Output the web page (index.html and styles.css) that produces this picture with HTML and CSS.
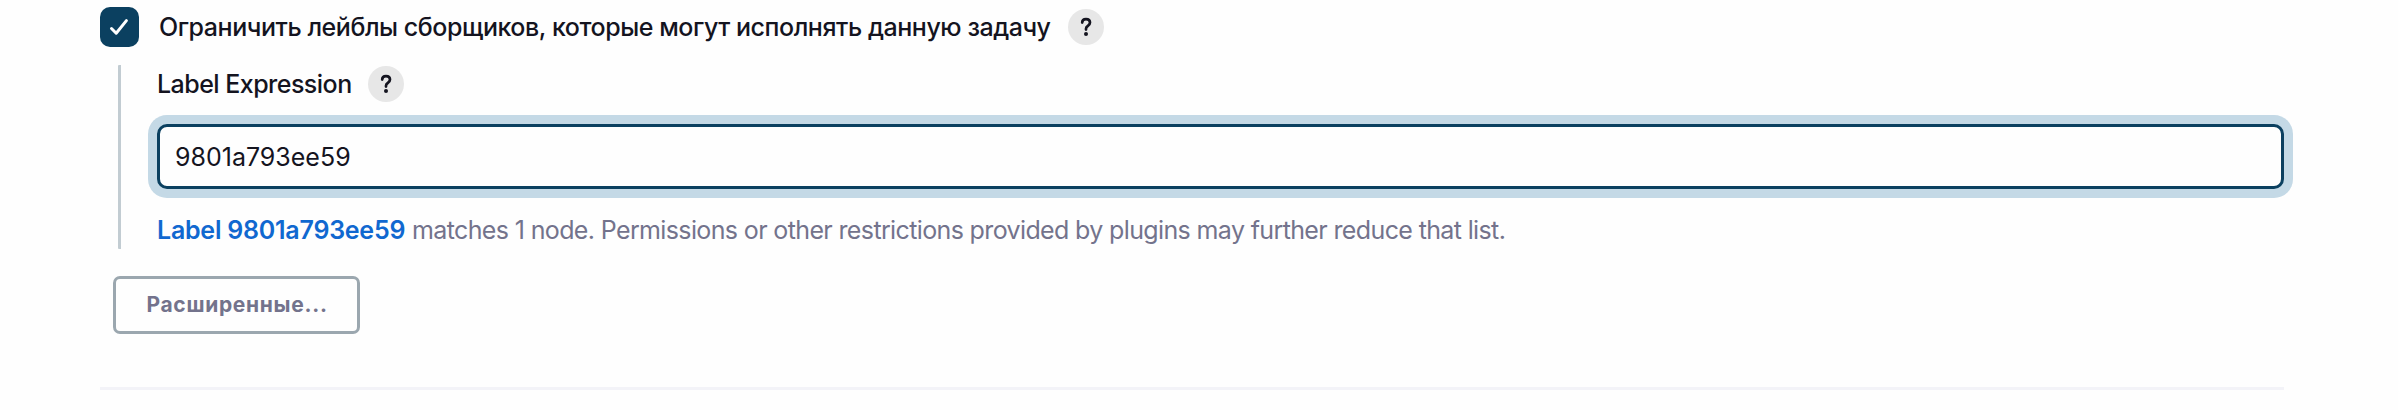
FILE: index.html
```html
<!DOCTYPE html>
<html lang="ru">
<head>
<meta charset="utf-8">
<title>Label Expression</title>
<link rel="stylesheet" href="styles.css">
</head>
<body>
<form class="section">
  <div class="option">
    <span class="checkbox" role="checkbox" aria-checked="true">
      <svg width="39" height="40" viewBox="0 0 39 40" fill="none" stroke="#fff" stroke-width="3" stroke-linecap="round" stroke-linejoin="round"><path d="M11.5 21.5L16.2 26.2L26.4 13.6"/></svg>
    </span>
    <span class="option-label">Ограничить лейблы сборщиков, которые могут исполнять данную задачу</span>
    <span class="help"><svg width="36" height="36" viewBox="0 0 36 36" fill="none" stroke="#14141f" stroke-width="2.7" stroke-linecap="round" stroke-linejoin="round"><path d="M14.2 13.6C14.2 11.5 15.8 10.2 18 10.2C20.4 10.2 22 11.6 22 13.6C22 15.2 21.2 16 19.9 16.9C18.6 17.8 18 18.5 18 19.8V20.6"/><circle cx="18" cy="25.1" r="2" fill="#14141f" stroke="none"/></svg></span>
  </div>
  <div class="nested">
    <div class="field-head">
      <span class="field-label">Label Expression</span>
      <span class="help"><svg width="36" height="36" viewBox="0 0 36 36" fill="none" stroke="#14141f" stroke-width="2.7" stroke-linecap="round" stroke-linejoin="round"><path d="M14.2 13.6C14.2 11.5 15.8 10.2 18 10.2C20.4 10.2 22 11.6 22 13.6C22 15.2 21.2 16 19.9 16.9C18.6 17.8 18 18.5 18 19.8V20.6"/><circle cx="18" cy="25.1" r="2" fill="#14141f" stroke="none"/></svg></span>
    </div>
    <input class="field" type="text" value="9801a793ee59" spellcheck="false">
    <div class="hint"><a class="hint-link">Label 9801a793ee59</a><span class="hint-text">matches 1 node. Permissions or other restrictions provided by plugins may further reduce that list.</span></div>
  </div>
  <button class="advanced" type="button">Расширенные...</button>
</form>
</body>
</html>
```
FILE: styles.css
```css
* { box-sizing: border-box; }
body {
  margin: 0;
  background: #fefefe;
  color: #14141f;
  font-family: Inter, "Liberation Sans", sans-serif;
  font-size: 25px;
}
.section {
  display: flex;
  flex-direction: column;
  align-items: flex-start;
  width: 2184px;
  height: 390px;
  margin-left: 100px;
  padding-top: 7px;
  border-bottom: 3px solid #f3f3f8;
}
.option {
  display: flex;
  align-items: center;
  height: 40px;
  white-space: nowrap;
}
.checkbox {
  width: 39px;
  height: 40px;
  border-radius: 10px;
  background: #0b4060;
}
.checkbox svg, .help svg { display: block; }
.option-label {
  width: 909px;
  margin-left: 20px;
  font-weight: 500;
  letter-spacing: -0.45px;
}
.help {
  flex: none;
  width: 36px;
  height: 36px;
  border-radius: 50%;
  background: #e7e7e7;
}
.nested {
  width: 2166px;
  height: 184px;
  margin: 18px 0 0 18px;
  padding-left: 36px;
  border-left: 3px solid #c2ccd2;
  border-radius: 1px;
}
.field-head {
  display: flex;
  align-items: center;
  height: 38px;
}
.field-label {
  width: 211px;
  font-weight: 500;
  letter-spacing: -0.53px;
  white-space: nowrap;
}
.field {
  display: block;
  width: 100%;
  height: 65px;
  margin: 21px 0 0;
  padding: 0 15px;
  border: 3px solid #0b4060;
  border-radius: 10px;
  outline: none;
  box-shadow: 0 0 0 9px #c4d9e6;
  background: #fefefe;
  color: #14141f;
  font: 400 25px Inter, "Liberation Sans", sans-serif;
  letter-spacing: 0;
}
.hint {
  display: flex;
  height: 36px;
  margin-top: 23px;
  line-height: 36px;
  white-space: nowrap;
}
.hint-link {
  width: 255px;
  color: #1068d0;
  font-weight: 600;
  letter-spacing: -0.24px;
}
.hint-text {
  color: #73738c;
  letter-spacing: -0.63px;
}
.advanced {
  width: 247px;
  height: 58px;
  margin: 27px 0 0 13px;
  padding: 0 0 2px 1px;
  border: 3px solid #9ba7af;
  border-radius: 7px;
  background: transparent;
  color: #73738c;
  font: 700 21px Inter, "Liberation Sans", sans-serif;
  letter-spacing: 0.7px;
}
```
